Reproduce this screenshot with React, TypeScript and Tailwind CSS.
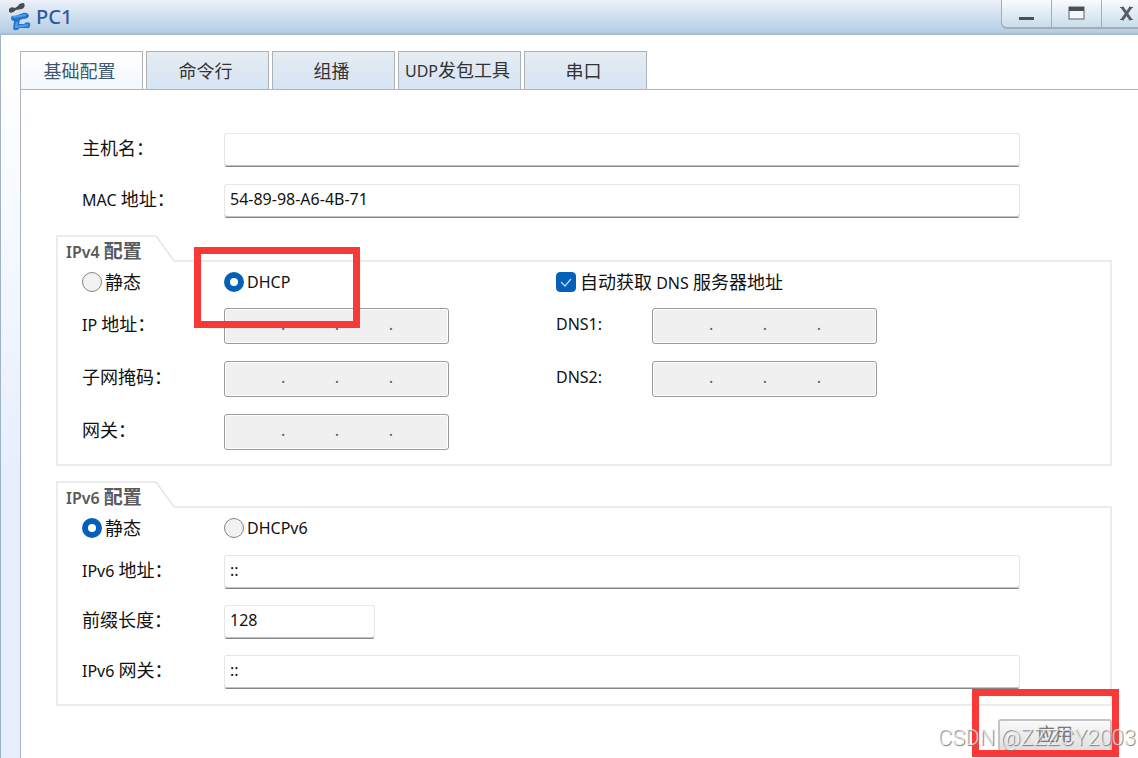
import React, {useState} from 'react';

const tabs = ['基础配置', '命令行', '组播', 'UDP发包工具', '串口']

// Chinese glyphs are set slightly larger than the latin ones beside them
const Cn = ({children}: { children: React.ReactNode }) => (
    <span className="text-[18px]">{children}</span>
)

const Label = ({id, children}: { id: string, children: React.ReactNode }) => (
    <label htmlFor={id} className="pb-1">{children}</label>
)

const TextField = ({id, value}: { id: string, value?: string }) => (
    <input id={id} type="text" defaultValue={value}
           className="h-[34px] w-full rounded-[3px] border border-[#e6e6e6] border-b-[#868686] bg-white px-[5px] pb-1 text-base shadow-[inset_0_-1px_0_#c4c4c4] outline-none"/>
)

const IpField = ({id}: { id: string }) => (
    <div className="grid h-9 w-[225px] items-center">
        <input id={id} type="text" disabled
               className="col-start-1 row-start-1 h-9 w-full rounded-[3px] border border-[#9a9a9a] bg-[#f0f0f0] shadow-[inset_0_0_0_1px_#fff]"/>
        <div className="col-start-1 row-start-1 flex justify-between pr-14 pb-1 pl-[57px] text-[#5c5c80]">
            <span>.</span><span>.</span><span>.</span>
        </div>
    </div>
)

const Radio = ({name, checked, onChange, children}: {
    name: string, checked: boolean, onChange: () => void, children: React.ReactNode
}) => (
    <label className="flex items-center gap-[3px]">
        <input type="radio" name={name} checked={checked} onChange={onChange}
               className="size-5 appearance-none rounded-full border border-[#858585] bg-[#f2f2f2] checked:border-[6px] checked:border-[#0560b8] checked:bg-white"/>
        <span>{children}</span>
    </label>
)

const Group = ({title, children}: { title: string, children: React.ReactNode }) => (
    <fieldset className="mr-[26px] min-w-0">
        <div className="flex h-[27px]">
            <div className="flex w-[100px] items-center border-t-2 border-l-2 border-[#ececec] pt-1 pl-2 font-semibold text-[#5a5a5a]">
                <span className="whitespace-nowrap">{title} <span className="text-[19px] font-bold">配置</span></span>
            </div>
            <svg className="h-[27px] w-[18px] shrink-0" viewBox="0 0 18 27" fill="none">
                <path d="M0 1 L18 26" stroke="#e4e4e4" strokeWidth="1.5"/>
            </svg>
            <div className="flex-1 border-b-2 border-[#ececec]"/>
        </div>
        <div className="border-x-2 border-b-2 border-[#ececec] pl-6">
            {children}
        </div>
    </fieldset>
)

const App = () => {

    const [active, setActive] = useState(0)
    const [v4Mode, setV4Mode] = useState('dhcp')
    const [v6Mode, setV6Mode] = useState('static')

    return (
        <div className="flex min-h-screen flex-col overflow-hidden bg-white font-['Noto_Sans','Noto_Sans_CJK_SC',sans-serif] text-base leading-6 text-[#111]">
            <header className="flex h-[35px] items-start justify-between border-b-2 border-[#a7bdcf] bg-linear-to-b from-[#edf1f9] to-[#b3cde5]">
                <div className="flex h-[33px] items-center gap-[5px] pl-2">
                    <svg className="h-7 w-[23px]" viewBox="0 0 23 28">
                        <path d="M1 6 Q3 3 7 5 L10 3 Q11 0 16 0 Q18 4 14 6 L8 7 Q4 11 1 9Z" fill="#4b4b4b"/>
                        <path d="M3 15 Q3 12 7 13 L15 10 Q20 9 21 13 Q20 16 15 16 L12 17 L11 21 L16 21 Q18 18 22 20 Q23 26 18 25 L12 25 Q8 29 5 26 L6 18 Q3 18 3 15Z" fill="#2675cd"/>
                        <path d="M5 14 L18 12 M9 19 L8 24 L20 22" stroke="#4f9fe8" strokeWidth="2" fill="none"/>
                    </svg>
                    <h1 className="text-[20px] font-medium text-[#2f5b9a]">PC1</h1>
                </div>
                <div className="-mr-3.5 flex h-[29px] divide-x divide-[#a4adb5] rounded-bl-md border-b-2 border-l border-[#a9acaf] bg-linear-to-b from-[#f9fbfd] to-[#c8ddec]">
                    <button aria-label="最小化" className="flex w-[50px] items-center justify-center">
                        <svg className="h-5 w-5" viewBox="0 0 20 20"><path d="M2 14.500 H17" stroke="#4c4f57" strokeWidth="3"/></svg>
                    </button>
                    <button aria-label="最大化" className="flex w-[50px] items-center justify-center">
                        <svg className="h-5 w-5" viewBox="0 0 20 20">
                            <rect x="2" y="3" width="15" height="12" fill="#f5f8fb" stroke="#5a5c64"/>
                            <rect x="2" y="3" width="15" height="4" fill="#4c4f57"/>
                        </svg>
                    </button>
                    <button aria-label="关闭" className="flex w-[50px] items-center justify-center">
                        <svg className="h-5 w-5" viewBox="0 0 20 20">
                            <path d="M5 3 L14 16 M14 3 L5 16" stroke="#5a5c64" strokeWidth="3"/>
                            <path d="M3 3.500 H7 M12 3.500 H16 M3 15.500 H7 M12 15.500 H16" stroke="#5a5c64"/>
                        </svg>
                    </button>
                </div>
            </header>

            <div className="flex flex-1 flex-col border-l border-[#9db4c8] bg-linear-to-b from-white from-5% to-[#e7effe] to-60%">
                <nav className="flex h-[54px] items-end gap-[3px] bg-white pl-[19px]">
                    {tabs.map((tab, i) => (
                        <button key={tab} onClick={() => setActive(i)}
                                className={i === active
                                    ? 'h-[38px] w-[123px] border border-b-0 border-[#aeb2b6] bg-linear-to-b from-white to-[#f3f8fd] pr-1 text-[18px] whitespace-nowrap text-[#40566e]'
                                    : 'h-[38px] w-[123px] border border-b-0 border-[#aeb2b6] bg-linear-to-b from-[#e6ecf2] to-[#d6e4f4] pr-1 text-[18px] whitespace-nowrap text-[#333]'}>
                            {tab.startsWith('UDP') ? <><span className="text-base">UDP</span>{tab.slice(3)}</> : tab}
                        </button>
                    ))}
                </nav>

                <main className="ml-[19px] flex-1 border-t border-l border-[#aeb4b9] bg-white pt-px pl-[35px]">
                    <div className="mr-[118px] grid grid-cols-[142px_1fr] items-center gap-y-[17px] pt-[42px] pl-[26px]">
                        <Label id="host"><Cn>主机名：</Cn></Label>
                        <TextField id="host"/>
                        <Label id="mac">MAC <Cn>地址：</Cn></Label>
                        <TextField id="mac" value="54-89-98-A6-4B-71"/>
                    </div>

                    <div className="mt-[17px]">
                        <Group title="IPv4">
                            <div className="grid grid-cols-[142px_332px_96px_1fr] items-center">
                                <Radio name="v4" checked={v4Mode === 'static'} onChange={() => setV4Mode('static')}>
                                    <Cn>静态</Cn>
                                </Radio>
                                <div className="relative flex h-10 items-center">
                                    <Radio name="v4" checked={v4Mode === 'dhcp'} onChange={() => setV4Mode('dhcp')}>DHCP</Radio>
                                    <div className="pointer-events-none absolute -top-[15px] -left-[30px] z-10 h-[81px] w-[166px] border-[7px] border-[#fb3838]"/>
                                </div>
                                <label className="col-span-2 flex items-center gap-1">
                                    <span className="grid size-5">
                                        <input type="checkbox" defaultChecked
                                               className="peer col-start-1 row-start-1 size-5 appearance-none rounded-sm border border-[#858585] checked:border-[#0560b8] checked:bg-[#0560b8]"/>
                                        <svg className="pointer-events-none col-start-1 row-start-1 hidden size-5 peer-checked:block" viewBox="0 0 20 20" fill="none">
                                            <path d="M5 10 L9 14 L15 7" stroke="#b9d6ef" strokeWidth="1.3"/>
                                        </svg>
                                    </span>
                                    <span><Cn>自动获取</Cn> DNS <Cn>服务器地址</Cn></span>
                                </label>
                            </div>
                            <div className="grid grid-cols-[142px_332px_96px_1fr] items-center gap-y-[17px] pt-[6px] pb-[14px]">
                                <Label id="ip">IP <Cn>地址：</Cn></Label>
                                <IpField id="ip"/>
                                <Label id="dns1">DNS1:</Label>
                                <IpField id="dns1"/>
                                <Label id="mask"><Cn>子网掩码：</Cn></Label>
                                <IpField id="mask"/>
                                <Label id="dns2">DNS2:</Label>
                                <IpField id="dns2"/>
                                <Label id="gateway"><Cn>网关：</Cn></Label>
                                <IpField id="gateway"/>
                            </div>
                        </Group>
                    </div>

                    <div className="mt-[15px]">
                        <Group title="IPv6">
                            <div className="grid h-10 grid-cols-[142px_1fr] items-center">
                                <Radio name="v6" checked={v6Mode === 'static'} onChange={() => setV6Mode('static')}>
                                    <Cn>静态</Cn>
                                </Radio>
                                <Radio name="v6" checked={v6Mode === 'dhcp'} onChange={() => setV6Mode('dhcp')}>DHCPv6</Radio>
                            </div>
                            <div className="mr-[90px] grid grid-cols-[142px_1fr] items-center gap-y-4 pt-[7px] pb-[15px]">
                                <Label id="ip6">IPv6 <Cn>地址：</Cn></Label>
                                <TextField id="ip6" value="::"/>
                                <Label id="prefix"><Cn>前缀长度：</Cn></Label>
                                <div className="w-[151px]"><TextField id="prefix" value="128"/></div>
                                <Label id="gateway6">IPv6 <Cn>网关：</Cn></Label>
                                <TextField id="gateway6" value="::"/>
                            </div>
                        </Group>
                    </div>

                    <div className="mr-[26px] flex justify-end pt-[13px]">
                        <div className="relative">
                            <button className="block h-[34px] w-[114px] rounded-[3px] border-2 border-[#c4c4c4] bg-linear-to-b from-[#fafafa] to-[#dedede] pb-1 text-[18px] text-[#777]">
                                应用
                            </button>
                            <div className="pointer-events-none absolute -top-[30px] -left-[26px] h-[68px] w-[147px] border-[7px] border-[#fb3838]"/>
                            <span className="pointer-events-none absolute top-[7px] -right-6 font-[Roboto,sans-serif] text-[22px] font-light whitespace-nowrap text-white/70 [text-shadow:1px_1px_1px_#777]">
                                CSDN @ZZZCY2003
                            </span>
                        </div>
                    </div>
                </main>
            </div>
        </div>
    )
}

export default App
